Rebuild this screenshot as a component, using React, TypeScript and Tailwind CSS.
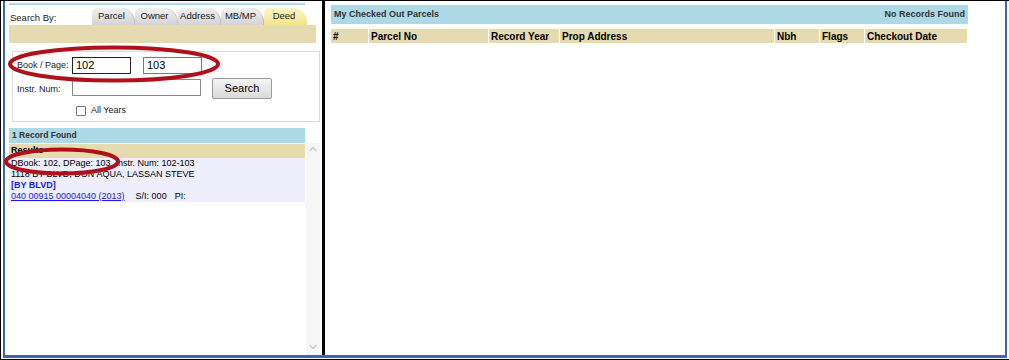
import { ChevronDown, ChevronUp } from 'lucide-react';

const tabs = ['Parcel', 'Owner', 'Address', 'MB/MP', 'Deed'];

const columns = [
  { label: '#', width: 'w-[37px]' },
  { label: 'Parcel No', width: 'w-[119px]' },
  { label: 'Record Year', width: 'w-[70px]' },
  { label: 'Prop Address', width: 'w-[214px]' },
  { label: 'Nbh', width: 'w-[44px]' },
  { label: 'Flags', width: 'w-[44px]' },
  { label: 'Checkout Date', width: 'w-[102px]' },
];

function Tab({ label }: { label: string }) {
  const active = label === 'Deed';
  return (
    <div
      className={
        active
          ? 'flex h-[17px] w-[43px] items-center justify-center rounded-tl-[5px] rounded-tr-[14px] bg-linear-to-b from-[#fdf6c6] to-[#f5e38a] pr-[3px] text-[9.5px] text-[#222]'
          : 'flex h-[17px] w-[43px] items-center justify-center rounded-tl-[5px] rounded-tr-[14px] border-r border-[#c0c0c0] bg-linear-to-b from-[#f0f0f0] to-[#d4d4d4] pr-[3px] text-[9.5px] text-[#222]'
      }
    >
      {label}
    </div>
  );
}

function SearchPanel() {
  return (
    <div className="flex h-full w-[317px] flex-col pl-[4px] pt-[2px]">
      <div className="h-[2px] w-[296px] bg-[#add8e6]" />
      <div className="flex h-[20px] items-end">
        <span className="ml-[1px] w-[82px] text-[9.5px] text-[#1a1a1a]">Search By:</span>
        {tabs.map((tab) => (
          <Tab key={tab} label={tab} />
        ))}
      </div>
      <div className="h-[18px] w-[307px] bg-[#e6dbb0]" />

      <div className="ml-[3px] mt-[8px] h-[71px] w-[308px] border border-[#dcdcdc] pl-[4px] pt-[5px] text-[9px] text-[#222]">
        <div className="flex h-[17px] items-center">
          <span className="w-[55px]">Book / Page:</span>
          <div className="flex h-[17px] w-[59px] items-center border border-[#222] pl-[3px] text-[11px] text-black">102</div>
          <div className="ml-[12px] flex h-[17px] w-[59px] items-center border border-[#7a7a7a] pl-[3px] text-[11px] text-black">
            103
          </div>
        </div>
        <div className="mt-[4px] flex h-[21px] items-start">
          <span className="mt-[5px] w-[55px]">Instr. Num:</span>
          <div className="mt-[1px] h-[17px] w-[129px] border border-[#8a8a8a] bg-white" />
          <button className="ml-[11px] h-[21px] w-[60px] rounded-[2px] border border-[#9a9a9a] bg-linear-to-b from-[#f4f4f4] to-[#dadada] text-[11px] text-black">
            Search
          </button>
        </div>
        <div className="ml-[59px] mt-[5px] flex items-center gap-[5px]">
          <div className="h-[10px] w-[10px] rounded-[1px] border border-[#777] bg-white" />
          <span>All Years</span>
        </div>
      </div>

      <div className="mt-[6px] flex flex-1">
        <div className="w-[296px]">
          <div className="flex h-[15px] items-center bg-[#add8e6] pl-[3px] text-[8.5px] font-bold text-[#333]">1 Record Found</div>
          <div className="mt-px flex h-[14px] items-center bg-[#e6dbb0] pl-[2px] text-[9px] font-bold text-black">Results</div>
          <div className="h-[44px] bg-[#eeeefc] pl-[2px] text-[9px] leading-[11px] text-black">
            <div>DBook: 102, DPage: 103, Instr. Num: 102-103</div>
            <div>1118 BY BLVD, DON AQUA, LASSAN STEVE</div>
            <div className="font-bold text-[#1a1aee]">[BY BLVD]</div>
            <div className="flex">
              <span className="text-[#1a1aee] underline">040 00915 00004040 (2013)</span>
              <span className="ml-[11px]">S/I: 000</span>
              <span className="ml-[8px]">PI:</span>
            </div>
          </div>
        </div>
        <div className="ml-px mt-[15px] flex w-[14px] flex-col items-center justify-between bg-[#f6f6f6] pb-[2px]">
          <ChevronUp size={12} strokeWidth={2.5} className="text-[#c8c8c8]" />
          <ChevronDown size={12} strokeWidth={2.5} className="text-[#c8c8c8]" />
        </div>
      </div>
    </div>
  );
}

function CheckoutPanel() {
  return (
    <div className="h-full w-[680px] pl-[6px] pt-[4px]">
      <div className="flex h-[19px] w-[637px] items-center justify-between bg-[#add8e6] px-[3px] text-[9px] font-bold text-[#333]">
        <span>My Checked Out Parcels</span>
        <span>No Records Found</span>
      </div>
      <div className="mt-[5px] flex gap-px">
        {columns.map((col) => (
          <div
            key={col.label}
            className={`${col.width} flex h-[14px] items-center bg-[#e6dbb0] pl-[2px] text-[10px] font-bold text-black`}
          >
            {col.label}
          </div>
        ))}
      </div>
    </div>
  );
}

export default function App() {
  return (
    <div className="relative h-[360px] w-[1009px] border-b border-l border-t border-black bg-white font-['Liberation_Sans',Arial,sans-serif]">
      <div className="ml-[2px] flex h-[357px] w-[1004px] border-b-[3px] border-l-2 border-r-2 border-[#3b6aa6]">
        <SearchPanel />
        <div className="h-full w-[3px] bg-black" />
        <CheckoutPanel />
      </div>

      {/* red annotation circles drawn over the screenshot */}
      <svg className="pointer-events-none absolute left-0 top-0" width="1009" height="360">
        <ellipse cx="113" cy="63" rx="104" ry="16.5" fill="none" stroke="#b0101a" strokeWidth="4" />
        <ellipse cx="61" cy="160.5" rx="56" ry="12" fill="none" stroke="#b0101a" strokeWidth="4" />
      </svg>
    </div>
  );
}
